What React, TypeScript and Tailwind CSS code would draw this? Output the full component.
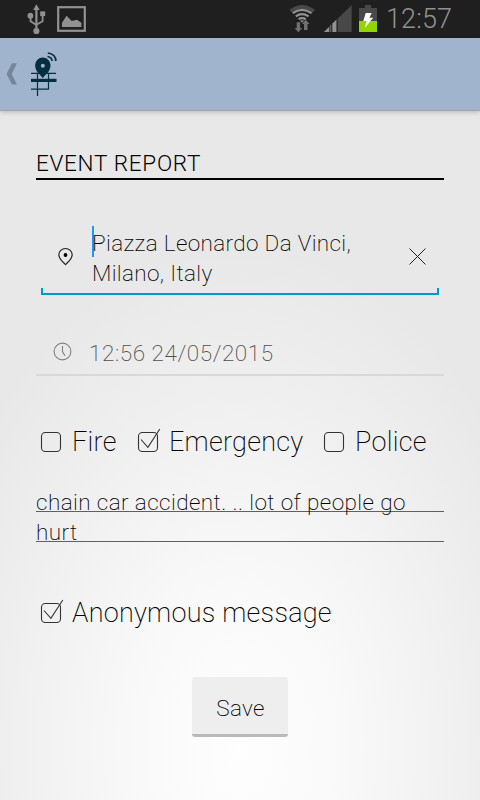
import React from "react";

function StatusBar() {
  return (
    <div className="flex h-[38px] items-start bg-[#1f1f1f]">
      <svg className="ml-[27px] h-[38px] w-[60px] shrink-0" viewBox="27 0 60 38" fill="none">
        <g stroke="#919191" strokeWidth="1.8">
          <path d="M36.4 7v24" strokeWidth="2.2" />
          <path d="M30.6 16v5.3l5.8 3.6M42.6 15v6.2l-6.2 3.5" />
        </g>
        <g fill="#919191">
          <path d="M36.4 4.2l3.3 5.8h-6.6z" />
          <circle cx="30.4" cy="15.7" r="2.9" />
          <rect x="40.2" y="11.4" width="5" height="4.7" />
          <circle cx="36.4" cy="31" r="3.1" />
          <path d="M62 27v-4.3l4.6-7 5 5.3 5.4-1.2 4.4 3V27z" />
        </g>
        <rect x="58.2" y="7.2" width="26.6" height="23.6" stroke="#919191" strokeWidth="2.2" />
      </svg>
      <svg className="ml-auto h-[38px] w-[92px] shrink-0" viewBox="288 0 92 38" fill="none">
        <path d="M289.5 9.7q12.5-9.4 25.500 0l-2.200 2.900q-10.300-7.200-21 0z" fill="#484848" />
        <g stroke="#919191" strokeWidth="2.2">
          <path d="M292.8 13.2q9.2-6.6 18.800 0" />
          <path d="M295.8 16.3q6.2-4.5 12.800 0" />
          <path d="M298.6 19.2q3.4-2.3 7.200 0" />
        </g>
        <path d="M299.6 20.6h4.8l-2.4 2z" fill="#919191" />
        <path d="M296.7 22.3h3.4v5.8h2l-3.7 4.2-3.8-4.2h2.1zM304 30v-6h-2l3.7-4.2 3.8 4.2h-2v6z" fill="#707070" />
        <path d="M324 32L351.7 5v27z" fill="#484848" />
        <path d="M324 32l13-13v13z" fill="#919191" />
        <path d="M329.9 26v6M331.8 24v8M337 19v13" stroke="#111" strokeWidth="1" />
        <path d="M359 8h6V5h6v3h6v24h-18z" fill="#484848" />
        <path d="M359 21h18v11h-18z" fill="#93d500" />
        <path d="M365.7 13h6l-2.3 4.8h3.8L364.7 28l2-7h-3.4z" fill="white" />
      </svg>
      <span className="ml-[6px] mr-[26px] w-[68px] whitespace-nowrap text-[27px] leading-[38px] tracking-[0.1px] text-[#919191] font-light">12:57</span>
    </div>
  );
}

function AppBar() {
  return (
    <header className="relative h-[73px] border-b border-[#a2a4a7] bg-[#a0b4cd] shadow-[0_1px_5px_rgba(0,0,0,0.22)]">
      <svg className="block h-[72px] w-[80px]" viewBox="0 38 80 72" fill="none">
        <path d="M12 63.3h4.900L11.700 74l5.200 10.500H12L6.500 74z" fill="#75869a" />
        <g stroke="#042f40">
          <path d="M31 73.3h25M31 89.2h18M37.5 73v23M48.5 73v16.5" strokeWidth="1.2" />
          <path d="M31 80.4h25.5" strokeWidth="3.2" />
          <path d="M47.5 56.5q4.5.7 4.5 4.5M47.8 53q8 .8 8 8" strokeWidth="1.7" />
        </g>
        <path d="M42.8 78.3c-2-3.6-7.700-6-7.700-13.200a7.700 7.700 0 0 1 15.400 0c0 7.200-5.700 9.600-7.700 13.200z" fill="#042f40" />
        <circle cx="42.8" cy="65.800" r="2" fill="#a0b4cd" />
      </svg>
    </header>
  );
}

function Check({ label, checked }: { label: string; checked?: boolean }) {
  return (
    <label className="flex h-9 items-center">
      <svg className="h-9 w-[32px] shrink-0" viewBox="0 0 32 36" fill="none" stroke="#333" strokeWidth="1.1">
        <rect x="1.5" y="8.500" width="19" height="19" rx="3.800" />
        {checked && <path d="M4 15.500l6.900 7.800L22.800 5" />}
      </svg>
      <span className="whitespace-nowrap text-[27px] leading-9 font-extralight tracking-[0.25px] text-black">{label}</span>
    </label>
  );
}

export default function App() {
  return (
    <div className="flex h-[800px] w-[480px] flex-col overflow-hidden bg-[radial-gradient(325px_500px_at_240px_745px,#fefefe_0%,#f9f9f9_32%,#e8e8e8_100%)] font-['Roboto',sans-serif]">
      <StatusBar />
      <AppBar />
      <main className="flex flex-col px-9 pt-[39px]">
        <h1 className="h-[30px] border-b-2 border-black text-[22.5px] leading-[26px] font-[350] tracking-[0.7px] text-black">EVENT REPORT</h1>

        <div className="mx-[5px] mt-[46px] flex h-[69px] flex-col">
          <div className="flex h-[62px] items-start">
            <svg className="ml-[15px] mt-[21px] h-5 w-5 shrink-0" viewBox="0 0 20 20" fill="none">
              <path d="M9.500 17.700C7 14.900 2.800 12 2.800 7.800a6.700 6.300 0 0 1 13.400 0c0 4.200-4.200 7.100-6.700 9.900z" stroke="#222" strokeWidth="1.200" />
              <circle cx="9.500" cy="8" r="1.900" fill="#000" />
            </svg>
            <span className="ml-[16px] h-[31px] w-[2px] shrink-0 bg-[#2196f3]" />
            <p className="-ml-[2px] pt-[2px] text-[22.5px] leading-[30px] font-extralight tracking-[0.35px] whitespace-nowrap text-black">
              Piazza Leonardo Da Vinci,<br />Milano, Italy
            </p>
            <svg className="ml-auto mr-[11px] mt-[20px] h-5 w-5 shrink-0" viewBox="0 0 20 20" stroke="#222" strokeWidth="1">
              <path d="M1.500 2.500l16 16M17.500 2.500l-16 16" />
            </svg>
          </div>
          <div className="h-[7px] border-x-2 border-b-2 border-[#0099cc]" />
        </div>

        <div className="mt-[43px] flex h-[38px] border-b-2 border-[#d8d8d8]">
          <svg className="ml-[17px] mt-[4px] h-5 w-5 shrink-0" viewBox="0 0 20 20" fill="none" stroke="#808080" strokeWidth="1.100">
            <circle cx="9.500" cy="9.500" r="8.400" />
            <path d="M9.500 4v5.800l2.600 4" />
          </svg>
          <span className="ml-[16px] text-[22.5px] leading-[30px] font-extralight tracking-[0.56px] whitespace-nowrap text-[#505050]">12:56 24/05/2015</span>
        </div>

        <div className="mt-12 flex pl-1">
          <div className="w-[97px]"><Check label="Fire" /></div>
          <div className="w-[186px]"><Check label="Emergency" checked /></div>
          <Check label="Police" />
        </div>

        <div className="mt-[27px] h-[60px] bg-[linear-gradient(to_bottom,transparent_24px,#606060_24px,#606060_25px,transparent_25px)] bg-[length:100%_30px] text-[22.5px] leading-[30px] font-extralight tracking-[0.41px] whitespace-nowrap text-black">
          chain car accident. .. lot of people go<br />hurt
        </div>

        <div className="mt-[48px] pl-1">
          <Check label="Anonymous message" checked />
        </div>

        <button className="mt-[46px] h-[60px] w-24 self-center rounded-[3px] border-b-[3px] border-[#bababa] bg-[#eeeeee] pt-[4px] pl-px text-[22.5px] leading-[30px] font-extralight tracking-[0.3px] text-black">Save</button>
      </main>
    </div>
  );
}
